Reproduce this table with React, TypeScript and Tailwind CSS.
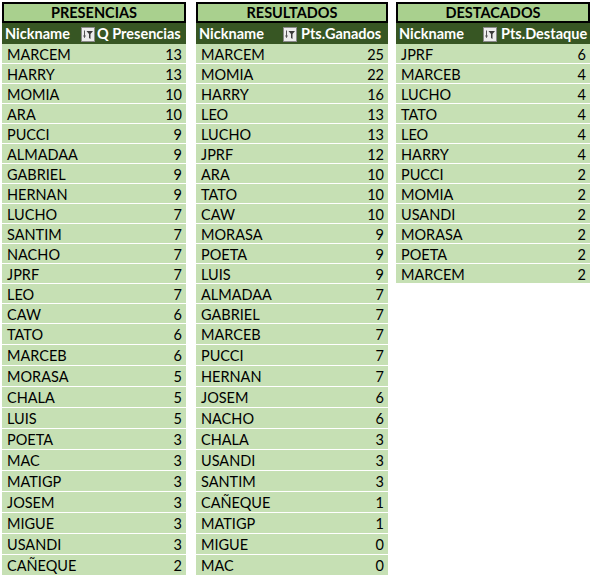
type Row = [string, number];

const presencias: Row[] = [
  ["MARCEM", 13], ["HARRY", 13], ["MOMIA", 10], ["ARA", 10], ["PUCCI", 9], ["ALMADAA", 9],
  ["GABRIEL", 9], ["HERNAN", 9], ["LUCHO", 7], ["SANTIM", 7], ["NACHO", 7], ["JPRF", 7],
  ["LEO", 7], ["CAW", 6], ["TATO", 6], ["MARCEB", 6], ["MORASA", 5], ["CHALA", 5],
  ["LUIS", 5], ["POETA", 3], ["MAC", 3], ["MATIGP", 3], ["JOSEM", 3], ["MIGUE", 3],
  ["USANDI", 3], ["CAÑEQUE", 2],
];

const resultados: Row[] = [
  ["MARCEM", 25], ["MOMIA", 22], ["HARRY", 16], ["LEO", 13], ["LUCHO", 13], ["JPRF", 12],
  ["ARA", 10], ["TATO", 10], ["CAW", 10], ["MORASA", 9], ["POETA", 9], ["LUIS", 9],
  ["ALMADAA", 7], ["GABRIEL", 7], ["MARCEB", 7], ["PUCCI", 7], ["HERNAN", 7], ["JOSEM", 6],
  ["NACHO", 6], ["CHALA", 3], ["USANDI", 3], ["SANTIM", 3], ["CAÑEQUE", 1], ["MATIGP", 1],
  ["MIGUE", 0], ["MAC", 0],
];

const destacados: Row[] = [
  ["JPRF", 6], ["MARCEB", 4], ["LUCHO", 4], ["TATO", 4], ["LEO", 4], ["HARRY", 4],
  ["PUCCI", 2], ["MOMIA", 2], ["USANDI", 2], ["MORASA", 2], ["POETA", 2], ["MARCEM", 2],
];

function FilterButton() {
  return (
    <svg width="14" height="15" viewBox="0 0 14 15" className="shrink-0">
      <rect x="0.5" y="0.5" width="13" height="14" fill="#ececec" stroke="#8a8a8a" />
      <path d="M3.5 3.5v7" stroke="#555" strokeWidth="1" />
      <path d="M2 8.5l1.5 2.5 1.5-2.5z" fill="#555" />
      <path d="M5.5 4h6.5l-2.5 3v5l-1.5-1v-4z" fill="#3a3a3a" />
    </svg>
  );
}

function Table({ title, label, rows, width, col1, labelPad }: { title: string; label: string; rows: Row[]; width: string; col1: string; labelPad: string }) {
  return (
    <div className={`flex flex-col ${width}`}>
      <div className="flex h-[21px] items-center justify-center border-2 border-black bg-[#a9d08e] pt-px text-[14.5px] font-bold text-black">{title}</div>
      <div className="flex h-[21px] items-center bg-[#375623] pt-px text-[14.5px] font-bold text-white">
        <div className={`flex items-center justify-between pl-[3px] pr-[1px] ${col1}`}>
          <span>Nickname</span>
          <FilterButton />
        </div>
        <span className={labelPad}>{label}</span>
      </div>
      {rows.map(([name, value], i) => (
        <div key={name} className={`flex items-center justify-between border-b border-white bg-[#c6e0b4] pl-[5px] pr-[4px] pt-[2px] text-[14.5px] text-black ${i < 14 ? "h-[20px]" : "h-[21px]"}`}>
          <span>{name}</span>
          <span>{value}</span>
        </div>
      ))}
    </div>
  );
}

export default function App() {
  return (
    <div className="flex h-[576px] items-start overflow-hidden bg-white pl-[2px] pt-[2px] font-['Lato','Liberation_Sans',sans-serif]">
      <Table title="PRESENCIAS" label="Q Presencias" rows={presencias} width="w-[184px]" col1="w-[94px]" labelPad="pl-[1px]" />
      <div className="w-[10px]" />
      <Table title="RESULTADOS" label="Pts.Ganados" rows={resultados} width="w-[192px]" col1="w-[102px]" labelPad="pl-[3px]" />
      <div className="w-[8px]" />
      <Table title="DESTACADOS" label="Pts.Destaque" rows={destacados} width="w-[194px]" col1="w-[102px]" labelPad="pl-[3px]" />
    </div>
  );
}
